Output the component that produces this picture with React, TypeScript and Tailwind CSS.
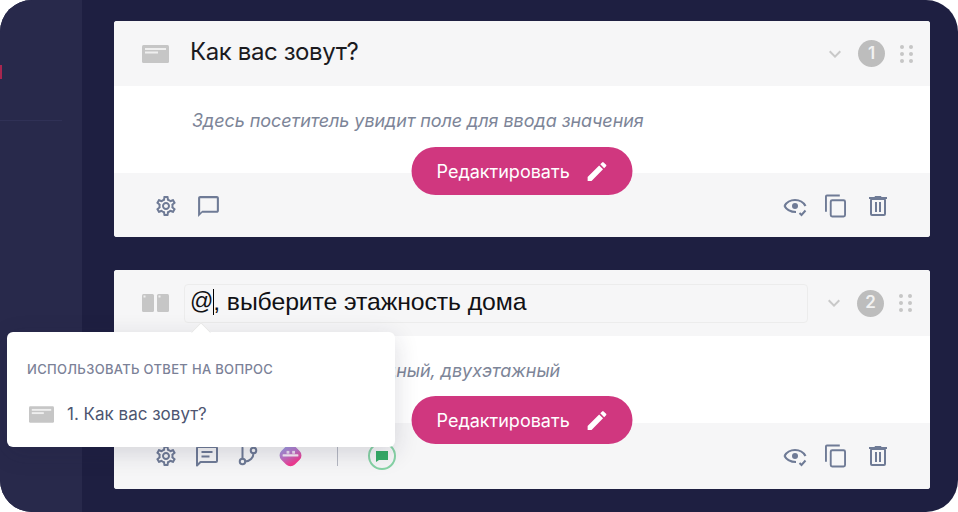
import React from "react";
import { GitBranch } from "lucide-react";
import { MdOutlineChatBubbleOutline, MdEdit, MdKeyboardArrowDown, MdOutlineSettings } from "react-icons/md";

const slate = "text-[#6f7b96]";

function SingleFieldIcon({ className }: { className?: string }) {
  return (
    <svg viewBox="0 0 27 18" className={className}>
      <rect width="27" height="18" rx="1.5" fill="#c6c6c6" />
      <rect x="3" y="3" width="21" height="2" fill="#efefef" />
      <rect x="3" y="6.5" width="13" height="2" fill="#efefef" />
    </svg>
  );
}

function ColumnsIcon({ className }: { className?: string }) {
  return (
    <svg viewBox="0 0 27 18" className={className}>
      <rect width="12" height="18" rx="1.5" fill="#c6c6c6" />
      <rect x="15" width="12" height="18" rx="1.5" fill="#c6c6c6" />
      <rect x="1.5" y="1.5" width="2" height="2" fill="#efefef" />
      <rect x="16.5" y="1.5" width="2" height="2" fill="#efefef" />
    </svg>
  );
}

function EyeCheckIcon() {
  return (
    <svg viewBox="0 0 24 24" className={`w-[24px] h-[24px] ${slate}`} fill="none" stroke="currentColor">
      <path d="M1.500 12C4 7.500 8 6 12 6s8 1.500 10.500 6" strokeWidth="2.200" />
      <path d="M1.500 12C4 16.500 8 18 13 18" strokeWidth="2.200" />
      <circle cx="12" cy="12" r="3" fill="currentColor" stroke="none" />
      <path d="M16.500 19l2 2 4-4.500" strokeWidth="2" />
    </svg>
  );
}

function CopyIcon() {
  return (
    <svg viewBox="0 0 22 24" className={`w-[21px] h-[24px] ${slate}`} fill="none" stroke="currentColor" strokeWidth="2">
      <path d="M15.500 1H2a1 1 0 0 0-1 1v16" />
      <rect x="6" y="6" width="15" height="17" rx="1.500" />
    </svg>
  );
}

function TrashIcon() {
  return (
    <svg viewBox="0 0 18 20" className={`w-[18px] h-[20px] ${slate}`} fill="none" stroke="currentColor" strokeWidth="2">
      <path d="M0 2h18" />
      <path d="M6 1.500V0.500h6v1" strokeWidth="1" />
      <rect x="2" y="3" width="14" height="16" rx="1" />
      <path d="M7 6v10M11 6v10" />
    </svg>
  );
}

function ChatLinesIcon() {
  return (
    <svg viewBox="0 0 22 21" className={`w-[22px] h-[21px] ${slate}`} fill="none" stroke="currentColor" strokeWidth="2">
      <path d="M1 19.500V2a1 1 0 0 1 1-1h18a1 1 0 0 1 1 1v13a1 1 0 0 1-1 1H4.500z" strokeLinejoin="round" />
      <path d="M5.500 6h11M5.500 10.500h8" />
    </svg>
  );
}

function TagBadgeIcon() {
  return (
    <svg viewBox="0 0 24 24" className="w-[27px] h-[27px]">
      <defs>
        <linearGradient id="tag" x1="0" y1="0" x2="1" y2="0.3">
          <stop offset="0" stopColor="#9a9fe2" />
          <stop offset="0.5" stopColor="#b976c8" />
          <stop offset="1" stopColor="#ef3a90" />
        </linearGradient>
      </defs>
      <rect x="3.500" y="2.500" width="17" height="17" rx="5.500" transform="rotate(45 12 11)" fill="url(#tag)" />
      <rect x="5" y="10" width="14" height="2" rx="0.500" fill="#fff" opacity="0.85" />
      <rect x="8.500" y="7" width="2.500" height="2.500" fill="#fff" opacity="0.75" />
      <rect x="13.500" y="7" width="2.500" height="2.500" fill="#fff" opacity="0.75" />
    </svg>
  );
}

function RightTools() {
  return (
    <div className="flex items-center">
      <EyeCheckIcon />
      <span className="ml-[18px]">
        <CopyIcon />
      </span>
      <span className="ml-[23px]">
        <TrashIcon />
      </span>
    </div>
  );
}

function EditButton() {
  return (
    <button className="absolute left-1/2 top-[126px] -translate-x-1/2 flex items-center w-[221px] h-[48px] rounded-full bg-[#d0377f] text-white text-[18px] font-['Inter',sans-serif] pl-[25px]">
      Редактировать
      <MdEdit className="w-[25px] h-[25px] ml-[15px]" />
    </button>
  );
}

function HeaderRight({ n }: { n: number }) {
  return (
    <div className="flex items-center shrink-0">
      <MdKeyboardArrowDown className="w-[24px] h-[24px] text-[#c9c9c9] mr-[11px]" />
      <div className="w-[27px] h-[27px] rounded-full bg-[#bdbdbd] text-[#f2f2f2] text-[17px] font-semibold flex items-center justify-center">
        {n}
      </div>
      <div className="grid grid-cols-2 gap-x-[5px] gap-y-[3px] ml-[15px] mr-[1px]">
        {[0, 1, 2, 3, 4, 5].map((i) => (
          <span key={i} className="w-[4px] h-[4px] bg-[#c6c6c6] rounded-full" />
        ))}
      </div>
    </div>
  );
}

export default function App() {
  return (
    <div className="w-[958px] h-[512px] bg-white font-['Inter',sans-serif]">
      <div className="relative flex w-full h-full rounded-[32px] overflow-hidden bg-[#1e1f41]">
        {/* sidebar */}
        <aside className="w-[82px] shrink-0 bg-[#28294b] pt-[65px]">
          <div className="w-[2px] h-[14px] bg-[#a8264f]" />
          <div className="w-[62px] h-px bg-[#303156] mt-[41px]" />
        </aside>

        <main className="flex-1 pl-[32px] pr-[28px] pt-[21px] flex flex-col gap-[33px]">
          {/* question 1 */}
          <section className="relative rounded-[3px] overflow-hidden bg-white">
            <div className="h-[65px] bg-[#f6f6f7] flex items-center pl-[28px] pr-[16px]">
              <SingleFieldIcon className="w-[27px] h-[18px] shrink-0" />
              <div className="flex-1 pl-[21px] pb-[3px] text-[24px] tracking-[-0.4px] text-[#1b1b1f]">Как вас зовут?</div>
              <HeaderRight n={1} />
            </div>
            <div className="h-[87px] bg-white pl-[78px] pt-[21px] text-[18px] tracking-[-0.07px] italic text-[#7d8598]">
              Здесь посетитель увидит поле для ввода значения
            </div>
            <div className="h-[64px] bg-[#f6f6f7] flex items-center justify-between pl-[40px] pr-[43px] pt-[2px]">
              <div className={`flex items-center ${slate}`}>
                <MdOutlineSettings className="w-[24px] h-[24px]" />
                <span className="ml-[18px]">
                  <MdOutlineChatBubbleOutline className="w-[25px] h-[25px]" />
                </span>
              </div>
              <RightTools />
            </div>
            <EditButton />
          </section>

          {/* question 2 */}
          <section className="relative rounded-[3px] overflow-hidden bg-white">
            <div className="h-[66px] bg-[#f6f6f7] flex items-center pl-[28px] pr-[16px]">
              <ColumnsIcon className="w-[27px] h-[18px] shrink-0" />
              <div className="flex items-center w-[624px] h-[39px] ml-[15px] mr-[14px] pl-[5px] pb-[3px] border border-[#ececec] rounded-[4px] font-['Liberation_Sans',sans-serif] text-[24.8px] tracking-[-0.1px] text-[#111114] whitespace-pre">
                <span className="text-[23px]">@</span>
                <span className="inline-block w-px h-[26px] bg-black -mr-px" />, выберите этажность дома
              </div>
              <HeaderRight n={2} />
            </div>
            <div className="h-[87px] bg-white pl-[271px] pt-[21px] text-[18px] tracking-[-0.07px] italic text-[#7d8598]">
              дный, двухэтажный
            </div>
            <div className="h-[66px] bg-[#f6f6f7] flex items-center justify-between pl-[40px] pr-[43px]">
              <div className={`flex items-center ${slate}`}>
                <MdOutlineSettings className="w-[24px] h-[24px]" />
                <span className="ml-[18px]">
                  <ChatLinesIcon />
                </span>
                <GitBranch className="w-[22px] h-[22px] ml-[19px]" strokeWidth={2.2} />
                <span className="ml-[18px]">
                  <TagBadgeIcon />
                </span>
                <span className="w-px h-[20px] bg-[#b5b8c2] ml-[33px]" />
                <span className="ml-[30px] w-[28px] h-[28px] rounded-full border-2 border-[#86d3a5] flex items-center justify-center">
                  <svg viewBox="0 0 12 12" className="w-[12px] h-[12px]">
                    <path d="M0 1h12v9H3l-3 2z" fill="#35ad67" />
                  </svg>
                </span>
              </div>
              <RightTools />
            </div>
            <EditButton />
          </section>
        </main>

        {/* mention popup */}
        <div className="absolute left-[7px] top-[332px] w-[388px] h-[115px] rounded-[6px] bg-white shadow-[0_6px_24px_rgba(30,31,65,0.16)] pl-[20px] pt-[28px]">
          <div className="absolute left-[187px] -top-[7px] w-[14px] h-[14px] rotate-45 bg-white border-l border-t border-[#e6e6e6]" />
          <div className="text-[13px] font-medium tracking-[0.32px] uppercase text-[#7b8197]">
            Использовать ответ на вопрос
          </div>
          <div className="flex items-center gap-[13px] mt-[22px] pl-[2px]">
            <SingleFieldIcon className="w-[25px] h-[17px]" />
            <span className="text-[17px] text-[#4d5570]">1. Как вас зовут?</span>
          </div>
        </div>
      </div>
    </div>
  );
}
